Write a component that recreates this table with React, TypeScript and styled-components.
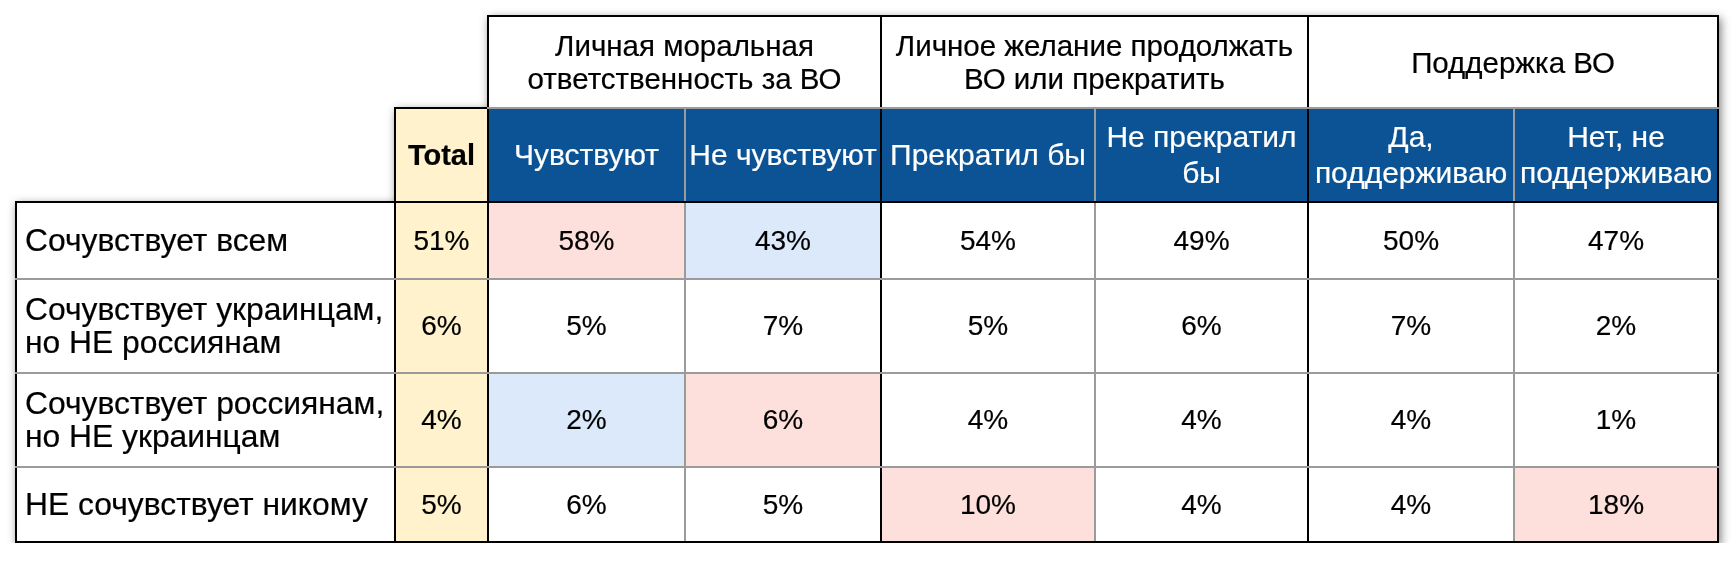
import React from "react";
import styled, { createGlobalStyle } from "styled-components";

const BLACK = "#000";
const GRAY = "#9b9b9b";

const GlobalStyle = createGlobalStyle`
  html, body { margin: 0; padding: 0; background: #ffffff; }
  body { font-family: "Liberation Sans", Arial, sans-serif; }
`;

const Page = styled.div`
  padding: 15px 0 0 15px;
`;

const Table = styled.table`
  border-collapse: collapse;
  table-layout: fixed;
  width: 1702px;
  filter: drop-shadow(2px 3px 5px rgba(0, 0, 0, 0.5));
  font-family: "Liberation Sans", Arial, sans-serif;
  color: #000;
`;

const Row = styled.tr<{ $h: number }>`
  height: ${(p) => p.$h}px;
`;

type Edge = string | undefined;
type Kind = "group" | "sub" | "label" | "num" | "total";

const fontSizes: Record<Kind, number> = {
  group: 29.5,
  sub: 30,
  label: 31.8,
  num: 28,
  total: 29,
};

const lineHeights: Record<Kind, number> = {
  group: 33,
  sub: 36,
  label: 33,
  num: 32,
  total: 32,
};

const Cell = styled.td<{
  $kind?: Kind;
  $l?: Edge;
  $r?: Edge;
  $t?: Edge;
  $b?: Edge;
  $bg?: string;
  $fg?: string;
}>`
  padding: 0 ${(p) => (p.$kind === "label" ? "8px" : "1px")};
  text-align: ${(p) => (p.$kind === "label" ? "left" : "center")};
  vertical-align: middle;
  font-size: ${(p) => fontSizes[p.$kind ?? "num"]}px;
  line-height: ${(p) => lineHeights[p.$kind ?? "num"]}px;
  font-weight: ${(p) => (p.$kind === "total" ? 700 : 400)};
  background: ${(p) => p.$bg ?? "transparent"};
  color: ${(p) => p.$fg ?? "#000"};
  -webkit-text-stroke: 0.2px ${(p) => p.$fg ?? "#000"};
  border-left: ${(p) => (p.$l ? `2px solid ${p.$l}` : "none")};
  border-right: ${(p) => (p.$r ? `2px solid ${p.$r}` : "none")};
  border-top: ${(p) => (p.$t ? `2px solid ${p.$t}` : "none")};
  border-bottom: ${(p) => (p.$b ? `2px solid ${p.$b}` : "none")};
  white-space: nowrap;
  overflow: hidden;
`;

const Line = styled.span`
  display: block;
`;

const colWidths = [379, 93, 197, 196, 214, 213, 206, 204];

// colour of the vertical line on the left of column i
const vline = (i: number) => (i === 3 || i === 5 || i === 7 ? GRAY : BLACK);

const PINK = "#fde0dc";
const BLUE = "#dbe9fb";
const YELLOW = "#fff2cc";
const HEADER_BLUE = "#0b5394";

const groups = [
  ["Личная моральная", "ответственность за ВО"],
  ["Личное желание продолжать", "ВО или прекратить"],
  ["Поддержка ВО"],
];

const subheads = [
  ["Чувствуют"],
  ["Не чувствуют"],
  ["Прекратил бы"],
  ["Не прекратил", "бы"],
  ["Да,", "поддерживаю"],
  ["Нет, не", "поддерживаю"],
];

type DataRow = {
  label: string[];
  total: string;
  values: string[];
  marks: (string | null)[];
  h: number;
};

const rows: DataRow[] = [
  {
    label: ["Сочувствует всем"],
    total: "51%",
    values: ["58%", "43%", "54%", "49%", "50%", "47%"],
    marks: [PINK, BLUE, null, null, null, null],
    h: 77,
  },
  {
    label: ["Сочувствует украинцам,", "но НЕ россиянам"],
    total: "6%",
    values: ["5%", "7%", "5%", "6%", "7%", "2%"],
    marks: [null, null, null, null, null, null],
    h: 94,
  },
  {
    label: ["Сочувствует россиянам,", "но НЕ украинцам"],
    total: "4%",
    values: ["2%", "6%", "4%", "4%", "4%", "1%"],
    marks: [BLUE, PINK, null, null, null, null],
    h: 94,
  },
  {
    label: ["НЕ сочувствует никому"],
    total: "5%",
    values: ["6%", "5%", "10%", "4%", "4%", "18%"],
    marks: [null, null, PINK, null, null, PINK],
    h: 75,
  },
];

const Lines = ({ parts }: { parts: string[] }) => (
  <>
    {parts.map((p, i) => (
      <Line key={i}>{p}</Line>
    ))}
  </>
);

export default function App() {
  return (
    <>
      <GlobalStyle />
      <Page>
        <Table>
          <colgroup>
            {colWidths.map((w, i) => (
              <col key={i} style={{ width: w }} />
            ))}
          </colgroup>
          <thead>
            <Row $h={92}>
              <Cell colSpan={2} />
              {groups.map((g, gi) => {
                const c = 2 + gi * 2;
                return (
                  <Cell
                    key={gi}
                    colSpan={2}
                    $kind="group"
                    $l={vline(c)}
                    $r={vline(c + 2)}
                    $t={BLACK}
                    $b={GRAY}
                    $bg="#fff"
                  >
                    <Lines parts={g} />
                  </Cell>
                );
              })}
            </Row>
            <Row $h={94}>
              <Cell />
              <Cell $kind="total" $l={BLACK} $r={BLACK} $t={BLACK} $b={BLACK} $bg={YELLOW}>
                Total
              </Cell>
              {subheads.map((s, si) => {
                const c = 2 + si;
                return (
                  <Cell
                    key={si}
                    $kind="sub"
                    $l={vline(c)}
                    $r={vline(c + 1)}
                    $t={GRAY}
                    $b={BLACK}
                    $bg={HEADER_BLUE}
                    $fg="#fff"
                  >
                    <Lines parts={s} />
                  </Cell>
                );
              })}
            </Row>
          </thead>
          <tbody>
            {rows.map((r, ri) => {
              const top = ri === 0 ? BLACK : GRAY;
              const bottom = ri === rows.length - 1 ? BLACK : GRAY;
              return (
                <Row key={ri} $h={r.h}>
                  <Cell $kind="label" $l={BLACK} $r={BLACK} $t={top} $b={bottom} $bg="#fff">
                    <Lines parts={r.label} />
                  </Cell>
                  <Cell $kind="num" $l={BLACK} $r={BLACK} $t={top} $b={bottom} $bg={YELLOW}>
                    {r.total}
                  </Cell>
                  {r.values.map((v, vi) => {
                    const c = 2 + vi;
                    return (
                      <Cell
                        key={vi}
                        $kind="num"
                        $l={vline(c)}
                        $r={vline(c + 1)}
                        $t={top}
                        $b={bottom}
                        $bg={r.marks[vi] ?? "#fff"}
                      >
                        {v}
                      </Cell>
                    );
                  })}
                </Row>
              );
            })}
          </tbody>
        </Table>
      </Page>
    </>
  );
}
